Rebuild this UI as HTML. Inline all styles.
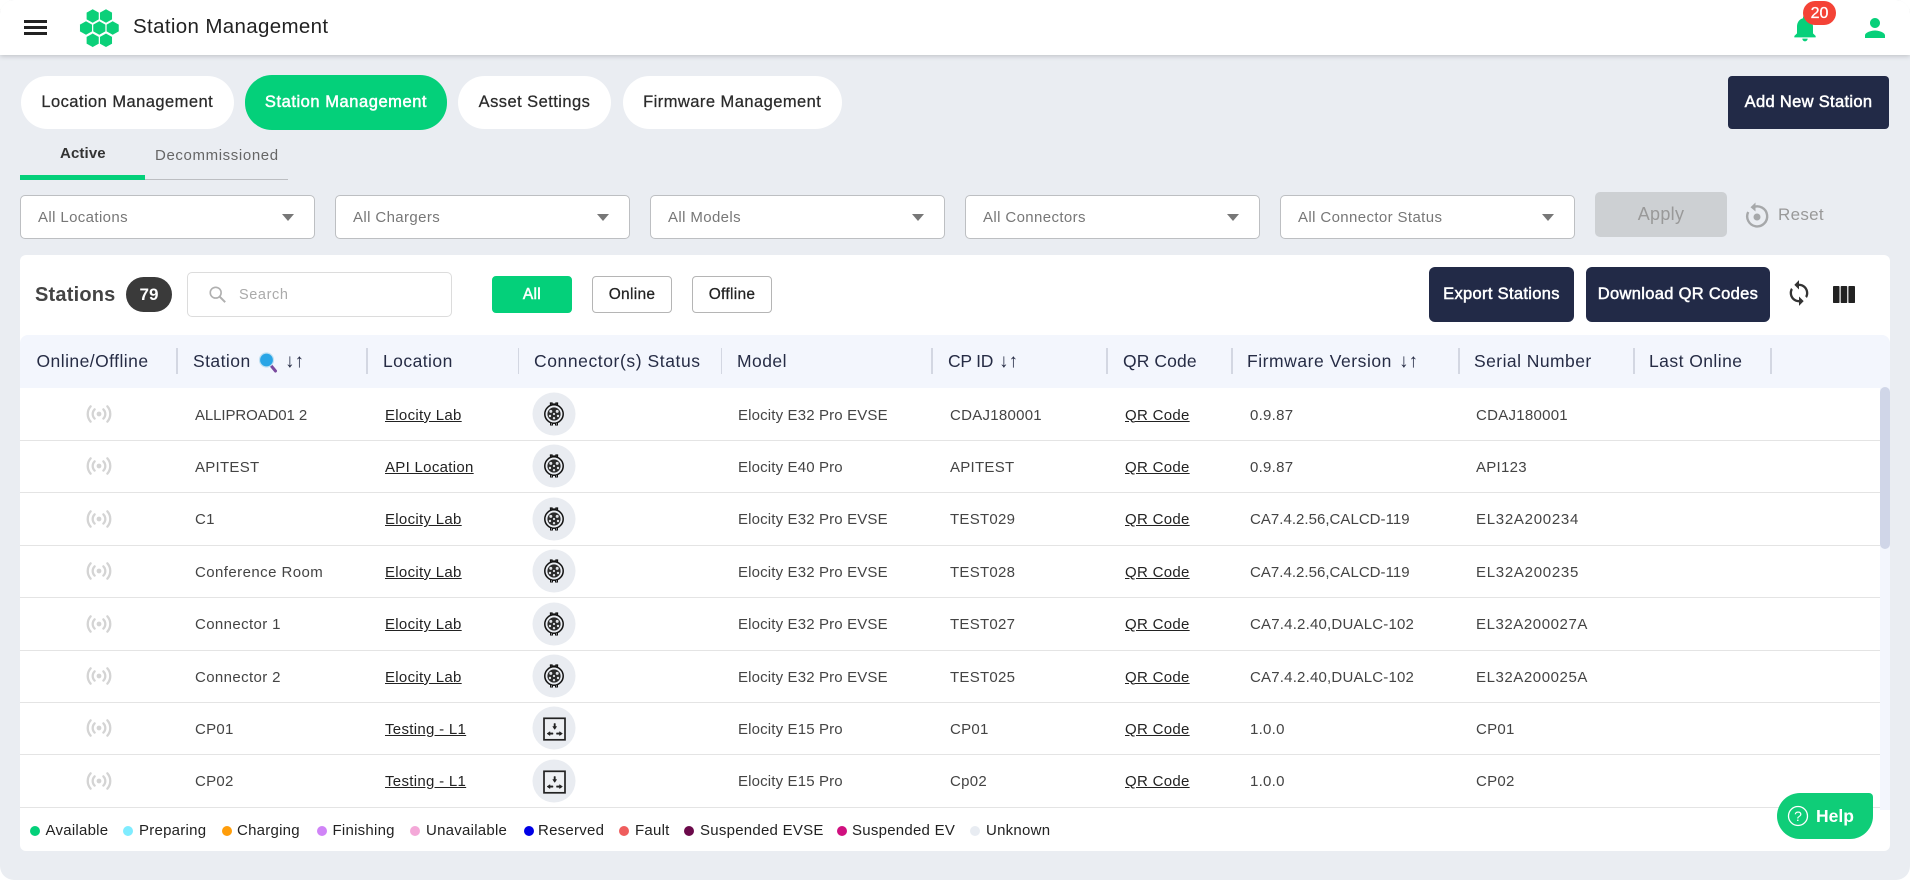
<!DOCTYPE html>
<html lang="en"><head><meta charset="utf-8"><title>Station Management</title>
<style>
*{box-sizing:border-box;margin:0;padding:0}
html,body{width:1910px;height:880px;overflow:hidden;background:#fff;font-family:"Liberation Sans",sans-serif}
#app{position:absolute;left:0;top:0;width:1910px;height:880px;background:#eaedf2;border-radius:14px;overflow:hidden}
.a{position:absolute;white-space:nowrap}
.hd{left:0;top:0;width:1910px;height:55px;background:#fff;box-shadow:0 1px 5px rgba(0,0,0,.2)}
.pill{top:76px;height:53px;background:#fff;border-radius:27px;text-align:center;line-height:53px;font-size:16.5px;letter-spacing:.45px;color:#2b2b2b;-webkit-text-stroke:.25px #2b2b2b}
.dark{background:#222a47;color:#fff;font-size:16.5px;text-align:center;letter-spacing:.32px;-webkit-text-stroke:.5px #fff}
.sel{top:195px;width:295px;height:44px;background:#fff;border:1px solid #bdbfc2;border-radius:5px;font-size:15px;letter-spacing:.38px;color:#777;line-height:44px;padding-left:17px}
.sel:after{content:"";position:absolute;right:20px;top:18px;border-left:6px solid transparent;border-right:6px solid transparent;border-top:7px solid #777}
.fb{top:276px;width:80px;height:37px;border:1px solid #b5b5b5;border-radius:4px;background:#fff;text-align:center;line-height:35px;font-size:15.5px;letter-spacing:.3px;color:#222;-webkit-text-stroke:.25px #222}
.th{top:335px;line-height:53px;height:53px;font-size:17.5px;letter-spacing:.45px;color:#262c45}
.ar{font-size:19px;letter-spacing:0}
.sep{top:348px;width:2px;height:26px;background:#d3d7e2}
.row{left:20px;width:1860px;height:52.4px;border-bottom:1px solid #e4e4e4}
.row span{position:absolute;top:0;line-height:53px;font-size:15px;letter-spacing:.27px;color:#444;white-space:nowrap}
.row u{position:absolute;top:0;line-height:53px;font-size:15px;letter-spacing:.3px;color:#222;white-space:nowrap}
.c1{left:175px}.c2{left:365px}.row .c4{left:718px;letter-spacing:.15px}.c5{left:930px}.c6{left:1105px}.c7{left:1230px}.c8{left:1456px}
.row svg{position:absolute}
.ci{left:512px;top:3.400px}
.on{left:65.500px;top:16.400px}
.lg{top:820px;line-height:22px;font-size:15px;letter-spacing:.25px;color:#222}
.dot{top:826px;width:10px;height:10px;border-radius:50%}
</style></head><body>
<svg width="0" height="0" style="position:absolute"><defs>
<symbol id="ccs" viewBox="0 0 44 44">
<circle cx="22" cy="22" r="21.5" fill="#e9ecf1"/>
<path d="M18.500 13V11h1.500v1h4v-1h1.500v2" fill="none" stroke="#111" stroke-width="1.300"/>
<circle cx="22" cy="22" r="9.200" fill="none" stroke="#111" stroke-width="1.500"/>
<circle cx="22" cy="22" r="6.600" fill="#2a2a2a"/>
<circle cx="18.800" cy="19.400" r="1.500" fill="#dfe1e5"/><circle cx="25.200" cy="19.400" r="1.500" fill="#dfe1e5"/><circle cx="22" cy="22" r="1.100" fill="#dfe1e5"/><circle cx="18" cy="24" r="1.200" fill="#dfe1e5"/><circle cx="26" cy="24" r="1.200" fill="#dfe1e5"/><circle cx="22" cy="26.200" r="1.200" fill="#dfe1e5"/>
<path d="M18.500 31h2v2h-2zM23.500 31h2v2h-2z" fill="none" stroke="#111" stroke-width="1"/>
</symbol>
<symbol id="sock" viewBox="0 0 44 44">
<circle cx="22" cy="22" r="21.5" fill="#e9ecf1"/>
<rect x="12" y="12.300" width="21" height="21.500" fill="#eef0f3" stroke="#222" stroke-width="1.700"/>
<path d="M22 17.500h1.400v3h1.300l-2 3-2-3H22zM15 27.600l3-2v1.300h3v1.400h-3v1.300zM30.500 27.600l-3-2v1.300h-3v1.400h3v1.300z" fill="#222" stroke="#222" stroke-width=".5"/>
</symbol>
<symbol id="sig" viewBox="0 0 26 18">
<circle cx="13" cy="9" r="2.400" fill="#d4d4d4"/>
<g fill="none" stroke="#d4d4d4" stroke-width="2.300" stroke-linecap="round"><path d="M8.600 4.400a6.500 6.500 0 0 0 0 9.200M17.400 4.400a6.500 6.500 0 0 1 0 9.200M4.600 1.400a11.500 11.500 0 0 0 0 15.200M21.400 1.400a11.500 11.500 0 0 1 0 15.200"/></g>
</symbol>
</defs></svg>
<div id="app">
<div class="a hd"></div>
<svg class="a" style="left:24px;top:20px" width="23" height="15"><path d="M0 1.500h23M0 7.500h23M0 13.500h23" stroke="#222" stroke-width="3"/></svg>
<svg class="a" style="left:78px;top:7px" width="44" height="42"><g fill="#0bd079" stroke="#fff" stroke-width=".5"><path d="M14.700 2l6.300 3.500v7L14.700 16 8.400 12.500v-7z"/><path d="M28 2l6.300 3.500v7L28 16l-6.300-3.500v-7z"/><path d="M8 14l6.300 3.500v7L8 28l-6.300-3.500v-7z"/><path d="M21.300 14l6.300 3.500v7L21.300 28 15 24.500v-7z"/><path d="M34.700 14l6.300 3.500v7L34.700 28l-6.300-3.500v-7z"/><path d="M14.700 26.300l6.300 3.500v7l-6.300 3.500-6.300-3.500v-7z"/><path d="M28 26.300l6.300 3.500v7L28 40.300l-6.300-3.500v-7z"/></g></svg>
<div class="a" style="left:133px;top:14px;line-height:26px;font-size:20.500px;letter-spacing:.35px;color:#222">Station Management</div>
<svg class="a" style="left:1788.700px;top:11.500px" width="32" height="32" viewBox="0 0 24 24"><path fill="#07d07a" d="M12 22c1.100 0 2-.9 2-2h-4c0 1.100.89 2 2 2zm6-6v-5c0-3.070-1.640-5.640-4.500-6.320V4c0-.83-.67-1.500-1.500-1.500s-1.500.67-1.500 1.500v.68C7.630 5.360 6 7.920 6 11v5l-2 2v1h16v-1l-2-2z"/></svg>
<div class="a" style="left:1803px;top:1px;width:33px;height:24px;border-radius:12px;background:#f44336;color:#fff;font-size:16px;-webkit-text-stroke:.3px #fff;text-align:center;line-height:25px">20</div>
<svg class="a" style="left:1860px;top:13px" width="30" height="30" viewBox="0 0 24 24"><path fill="#07d07a" d="M12 12c2.210 0 4-1.790 4-4s-1.790-4-4-4-4 1.790-4 4 1.790 4 4 4zm0 2c-2.670 0-8 1.340-8 4v2h16v-2c0-2.660-5.330-4-8-4z"/></svg>

<div class="a pill" style="left:20.500px;width:213.500px">Location Management</div>
<div class="a pill" style="left:245px;top:75px;height:55px;width:202px;background:#04d07a;color:#fff;line-height:55px;-webkit-text-stroke:.5px #fff;letter-spacing:.55px">Station Management</div>
<div class="a pill" style="left:458px;width:153px">Asset Settings</div>
<div class="a pill" style="left:622.500px;width:219.500px">Firmware Management</div>
<div class="a dark" style="left:1728px;top:76px;width:161px;height:53px;border-radius:4px;line-height:53px">Add New Station</div>

<div class="a" style="left:60px;top:143px;line-height:22px;font-size:15px;font-weight:bold;letter-spacing:.12px;color:#333">Active</div>
<div class="a" style="left:155px;top:145px;line-height:22px;font-size:15px;letter-spacing:.62px;color:#666">Decommissioned</div>
<div class="a" style="left:20px;top:179px;width:268px;height:1px;background:#bcbec2"></div>
<div class="a" style="left:20px;top:175px;width:125px;height:5px;background:#04d07a"></div>

<div class="a sel" style="left:20px">All Locations</div>
<div class="a sel" style="left:335px">All Chargers</div>
<div class="a sel" style="left:650px">All Models</div>
<div class="a sel" style="left:965px">All Connectors</div>
<div class="a sel" style="left:1280px">All Connector Status</div>
<div class="a" style="left:1595px;top:192px;width:132px;height:45px;border-radius:5px;background:#cdd0d3;color:#999;font-size:18px;letter-spacing:.3px;text-align:center;line-height:44px">Apply</div>
<svg class="a" style="left:1744px;top:201px" width="26" height="28" viewBox="0 0 26 28"><path d="M9 6.300A10 10 0 1 1 4.200 11" fill="none" stroke="#a6a8aa" stroke-width="2.400"/><path d="M11.500 1.500L6.500 6.300l5 4.200z" fill="#a6a8aa"/><circle cx="13" cy="16" r="3.500" fill="#a6a8aa"/></svg>
<div class="a" style="left:1778px;top:203px;line-height:24px;font-size:17px;letter-spacing:.3px;color:#999">Reset</div>

<div class="a" style="left:20px;top:255px;width:1870px;height:596px;background:#fff;border-radius:6px"></div>
<div class="a" style="left:35px;top:281px;line-height:28px;font-size:20px;font-weight:bold;letter-spacing:.2px;color:#444">Stations</div>
<div class="a" style="left:126px;top:277px;width:46px;height:35px;border-radius:18px;background:#3a3a3a;color:#fff;font-weight:bold;font-size:17px;text-align:center;line-height:35px">79</div>
<div class="a" style="left:187px;top:272px;width:265px;height:45px;border:1px solid #dcdcdc;border-radius:5px"></div>
<svg class="a" style="left:208px;top:285px" width="19" height="19" viewBox="0 0 21 21"><circle cx="8.500" cy="8.500" r="6" fill="none" stroke="#b0b0b0" stroke-width="1.800"/><path d="M13 13l6 6" stroke="#b0b0b0" stroke-width="2.200"/></svg>
<div class="a" style="left:239px;top:284px;line-height:22px;font-size:14.500px;letter-spacing:.6px;color:#aaa">Search</div>
<div class="a fb" style="left:492px;background:#04d07a;border-color:#04d07a;color:#fff;-webkit-text-stroke:.5px #fff">All</div>
<div class="a fb" style="left:592px">Online</div>
<div class="a fb" style="left:692px">Offline</div>
<div class="a dark" style="left:1429px;top:267px;width:145px;height:55px;border-radius:6px;line-height:55px">Export Stations</div>
<div class="a dark" style="left:1586px;top:267px;width:184px;height:55px;border-radius:6px;line-height:55px">Download QR Codes</div>
<svg class="a" style="left:1785px;top:279px" width="28" height="28" viewBox="0 0 24 24"><path fill="#333" d="M12 4V1L8 5l4 4V6c3.310 0 6 2.690 6 6 0 1.010-.25 1.970-.7 2.800l1.460 1.460C19.540 15.030 20 13.570 20 12c0-4.420-3.580-8-8-8zm0 14c-3.310 0-6-2.690-6-6 0-1.010.25-1.970.7-2.800L5.240 7.740C4.460 8.970 4 10.430 4 12c0 4.420 3.580 8 8 8v3l4-4-4-4v3z"/></svg>
<svg class="a" style="left:1833px;top:286px" width="22" height="17"><rect width="6.500" height="17" rx=".8" fill="#222"/><rect x="7.700" width="6.500" height="17" rx=".8" fill="#222"/><rect x="15.400" width="6.600" height="17" rx=".8" fill="#222"/></svg>

<div class="a" style="left:20px;top:335px;width:1870px;height:53px;background:#f3f6fd;border-radius:8px 8px 0 0"></div>
<div class="a th" style="left:36.500px">Online/Offline</div><div class="a sep" style="left:176px"></div>
<div class="a th" style="left:193px">Station</div>
<svg class="a" style="left:258px;top:352px" width="20" height="21" viewBox="0 0 20 21"><path d="M12.500 13l5 6" stroke="#7a4a9e" stroke-width="3" stroke-linecap="round"/><circle cx="8.500" cy="8" r="7" fill="#29a5e6" stroke="#bfe0f2" stroke-width="1.200"/></svg>
<div class="a th ar" style="left:285px">↓↑</div><div class="a sep" style="left:366px"></div>
<div class="a th" style="left:383px">Location</div><div class="a sep" style="left:518px;width:1px"></div>
<div class="a th" style="left:534px;letter-spacing:.58px">Connector(s) Status</div><div class="a sep" style="left:720.500px;width:1px"></div>
<div class="a th" style="left:737px">Model</div><div class="a sep" style="left:930.500px"></div>
<div class="a th" style="left:948px;letter-spacing:-.25px">CP ID</div><div class="a th ar" style="left:999px">↓↑</div><div class="a sep" style="left:1106px"></div>
<div class="a th" style="left:1123px;letter-spacing:.1px">QR Code</div><div class="a sep" style="left:1231px"></div>
<div class="a th" style="left:1247px;letter-spacing:.55px">Firmware Version</div><div class="a th ar" style="left:1399px">↓↑</div><div class="a sep" style="left:1458px"></div>
<div class="a th" style="left:1474px">Serial Number</div><div class="a sep" style="left:1633px"></div>
<div class="a th" style="left:1649px">Last Online</div><div class="a sep" style="left:1770px"></div>

<div class="a" style="left:1880px;top:388px;width:10px;height:422px;background:#f3f6fd"></div>
<div class="a" style="left:1880px;top:387px;width:10px;height:162px;background:#d0d6e8;border-radius:5px"></div>

<div class="a row" style="top:388.600px"><svg class="on" width="26" height="18"><use href="#sig"/></svg><span class="c1" style="letter-spacing:-.1px">ALLIPROAD01 2</span><u class="c2">Elocity Lab</u><svg class="ci" width="44" height="44"><use href="#ccs"/></svg><span class="c4">Elocity E32 Pro EVSE</span><span class="c5">CDAJ180001</span><u class="c6">QR Code</u><span class="c7">0.9.87</span><span class="c8">CDAJ180001</span></div>
<div class="a row" style="top:441px"><svg class="on" width="26" height="18"><use href="#sig"/></svg><span class="c1">APITEST</span><u class="c2">API Location</u><svg class="ci" width="44" height="44"><use href="#ccs"/></svg><span class="c4">Elocity E40 Pro</span><span class="c5">APITEST</span><u class="c6">QR Code</u><span class="c7">0.9.87</span><span class="c8">API123</span></div>
<div class="a row" style="top:493.400px"><svg class="on" width="26" height="18"><use href="#sig"/></svg><span class="c1">C1</span><u class="c2">Elocity Lab</u><svg class="ci" width="44" height="44"><use href="#ccs"/></svg><span class="c4">Elocity E32 Pro EVSE</span><span class="c5">TEST029</span><u class="c6">QR Code</u><span class="c7" style="letter-spacing:.03px">CA7.4.2.56,CALCD-119</span><span class="c8" style="letter-spacing:.72px">EL32A200234</span></div>
<div class="a row" style="top:545.800px"><svg class="on" width="26" height="18"><use href="#sig"/></svg><span class="c1" style="letter-spacing:.43px">Conference Room</span><u class="c2">Elocity Lab</u><svg class="ci" width="44" height="44"><use href="#ccs"/></svg><span class="c4">Elocity E32 Pro EVSE</span><span class="c5">TEST028</span><u class="c6">QR Code</u><span class="c7" style="letter-spacing:.03px">CA7.4.2.56,CALCD-119</span><span class="c8" style="letter-spacing:.72px">EL32A200235</span></div>
<div class="a row" style="top:598.200px"><svg class="on" width="26" height="18"><use href="#sig"/></svg><span class="c1" style="letter-spacing:.38px">Connector 1</span><u class="c2">Elocity Lab</u><svg class="ci" width="44" height="44"><use href="#ccs"/></svg><span class="c4">Elocity E32 Pro EVSE</span><span class="c5">TEST027</span><u class="c6">QR Code</u><span class="c7" style="letter-spacing:.2px">CA7.4.2.40,DUALC-102</span><span class="c8" style="letter-spacing:.57px">EL32A200027A</span></div>
<div class="a row" style="top:650.600px"><svg class="on" width="26" height="18"><use href="#sig"/></svg><span class="c1" style="letter-spacing:.38px">Connector 2</span><u class="c2">Elocity Lab</u><svg class="ci" width="44" height="44"><use href="#ccs"/></svg><span class="c4">Elocity E32 Pro EVSE</span><span class="c5">TEST025</span><u class="c6">QR Code</u><span class="c7" style="letter-spacing:.2px">CA7.4.2.40,DUALC-102</span><span class="c8" style="letter-spacing:.57px">EL32A200025A</span></div>
<div class="a row" style="top:703px"><svg class="on" width="26" height="18"><use href="#sig"/></svg><span class="c1">CP01</span><u class="c2">Testing - L1</u><svg class="ci" width="44" height="44"><use href="#sock"/></svg><span class="c4">Elocity E15 Pro</span><span class="c5">CP01</span><u class="c6">QR Code</u><span class="c7">1.0.0</span><span class="c8">CP01</span></div>
<div class="a row" style="top:755.400px"><svg class="on" width="26" height="18"><use href="#sig"/></svg><span class="c1">CP02</span><u class="c2">Testing - L1</u><svg class="ci" width="44" height="44"><use href="#sock"/></svg><span class="c4">Elocity E15 Pro</span><span class="c5">Cp02</span><u class="c6">QR Code</u><span class="c7">1.0.0</span><span class="c8">CP02</span></div>

<div class="a dot" style="left:30px;background:#04d07a"></div><div class="a lg" style="left:45.500px">Available</div>
<div class="a dot" style="left:123px;background:#7fecff"></div><div class="a lg" style="left:139px">Preparing</div>
<div class="a dot" style="left:222px;background:#ff9d0a"></div><div class="a lg" style="left:237px">Charging</div>
<div class="a dot" style="left:317px;background:#d084f7"></div><div class="a lg" style="left:332.500px">Finishing</div>
<div class="a dot" style="left:410px;background:#f4a8d8"></div><div class="a lg" style="left:426px">Unavailable</div>
<div class="a dot" style="left:523.500px;background:#0000e6"></div><div class="a lg" style="left:538px">Reserved</div>
<div class="a dot" style="left:619px;background:#ef5d5d"></div><div class="a lg" style="left:635px">Fault</div>
<div class="a dot" style="left:684px;background:#6b0a4a"></div><div class="a lg" style="left:700px">Suspended EVSE</div>
<div class="a dot" style="left:837px;background:#d0107f"></div><div class="a lg" style="left:852px">Suspended EV</div>
<div class="a dot" style="left:970px;background:#e8ecf2"></div><div class="a lg" style="left:986px">Unknown</div>

<div class="a" style="left:1777px;top:793px;width:96px;height:46px;background:#0fcd78;border-radius:23px 4px 23px 23px"></div>
<svg class="a" style="left:1787px;top:805px" width="22" height="22"><circle cx="11" cy="11" r="9.500" fill="none" stroke="#fff" stroke-width="1.300"/><text x="11" y="16" text-anchor="middle" font-family="Liberation Sans,sans-serif" font-size="14" fill="#fff">?</text></svg>
<div class="a" style="left:1816px;top:804px;line-height:24px;font-size:17.500px;font-weight:bold;color:#fff">Help</div>
</div>
</body></html>
